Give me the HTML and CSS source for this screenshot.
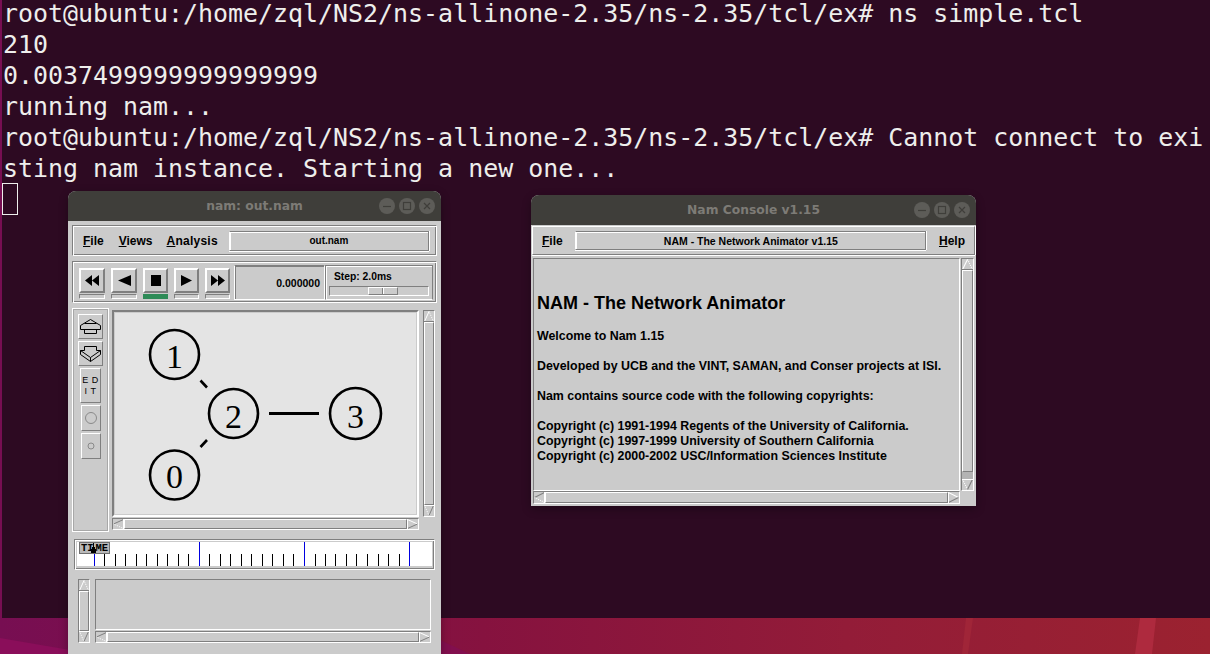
FILE: index.html
```html
<!DOCTYPE html>
<html lang="en">
<head>
<meta charset="utf-8">
<title>nam</title>
<link rel="stylesheet" href="styles.css">
</head>
<body>
<svg width="0" height="0" class="defs" aria-hidden="true">
  <symbol id="a-up" viewBox="0 0 10 11" preserveAspectRatio="none"><path d="M.5 10.500L5 .5" stroke="#fff" fill="none"/><path d="M5 .5L9.500 10.500" stroke="#fff" stroke-dasharray="1 1" fill="none"/><path d="M0 10.500H10" stroke="#7f7f7f" fill="none"/></symbol>
  <symbol id="a-down" viewBox="0 0 10 11" preserveAspectRatio="none"><path d="M.5 .5L5 10.500" stroke="#fff" stroke-dasharray="1 1" fill="none"/><path d="M5 10.500L9.500 .5" stroke="#7f7f7f" fill="none"/><path d="M0 .5H10" stroke="#fff" fill="none"/></symbol>
  <symbol id="a-left" viewBox="0 0 11 10" preserveAspectRatio="none"><path d="M.5 5L10.500 .5" stroke="#7f7f7f" fill="none"/><path d="M.5 5L10.500 9.500" stroke="#fff" stroke-dasharray="1 1" fill="none"/><path d="M10.500 0V10" stroke="#fff" fill="none"/></symbol>
  <symbol id="a-right" viewBox="0 0 11 10" preserveAspectRatio="none"><path d="M.5 .5L10.500 5" stroke="#fff" fill="none"/><path d="M.5 9.500L10.500 5" stroke="#7f7f7f" fill="none"/><path d="M.5 0V10" stroke="#fff" fill="none"/></symbol>
  <symbol id="win-btns" viewBox="0 0 56 16">
    <circle cx="8" cy="8" r="8" fill="#5d5c58"/><circle cx="28" cy="8" r="8" fill="#5d5c58"/><circle cx="48" cy="8" r="8" fill="#5d5c58"/>
    <path d="M4 8.500H12" stroke="#3f3e3a" stroke-width="1.200"/>
    <rect x="24.500" y="4.500" width="7" height="7" fill="none" stroke="#3f3e3a" stroke-width="1.200"/>
    <path d="M45 5L51 11M51 5L45 11" stroke="#3f3e3a" stroke-width="1.200"/>
  </symbol>
</svg>

<div class="desktop">
  <svg class="wallpaper" viewBox="0 0 1210 654" width="1210" height="654" aria-hidden="true">
    <defs>
      <linearGradient id="wall" x1="0" y1="0" x2="1" y2="0">
        <stop offset="0" stop-color="#770e52"/>
        <stop offset=".4" stop-color="#86123f"/>
        <stop offset=".7" stop-color="#931c38"/>
        <stop offset="1" stop-color="#9b2230"/>
      </linearGradient>
    </defs>
    <rect width="1210" height="654" fill="url(#wall)"/>
    <polygon points="0,638 70,650 70,654 0,654" fill="#8a0e5a"/>
    <polygon points="440,640 470,654 440,654" fill="#820f4e"/>
    <polygon points="966,618 973,618 968,654 962,654" fill="#a02538"/>
    <polygon points="1140,618 1156,618 1152,654 1135,654" fill="#ae2a3e"/>
  </svg>

  <div class="terminal">
    <div class="term-line">root@ubuntu:/home/zql/NS2/ns-allinone-2.35/ns-2.35/tcl/ex# ns simple.tcl</div>
    <div class="term-line">210</div>
    <div class="term-line">0.0037499999999999999</div>
    <div class="term-line">running nam...</div>
    <div class="term-line">root@ubuntu:/home/zql/NS2/ns-allinone-2.35/ns-2.35/tcl/ex# Cannot connect to exi</div>
    <div class="term-line">sting nam instance. Starting a new one...</div>
    <div class="term-cursor"></div>
  </div>

  <section class="window nam-window">
    <header class="titlebar"><span class="title">nam: out.nam</span><svg class="win-btns"><use href="#win-btns"/></svg></header>
    <div class="nam-body">
      <div class="groove nam-menu">
        <span class="menu-item nam-file"><u>F</u>ile</span>
        <span class="menu-item nam-views"><u>V</u>iews</span>
        <span class="menu-item nam-analysis"><u>A</u>nalysis</span>
        <div class="field nam-field">out.nam</div>
      </div>

      <div class="groove nam-toolbar">
        <div class="transport">
          <div class="tbtn wide"><div class="face"><svg viewBox="0 0 14 11" width="14" height="11"><path d="M7 0V11L0 5.500ZM14 0V11L7 5.500Z"/></svg></div><div class="led"></div></div>
          <div class="tbtn wide"><div class="face"><svg viewBox="0 0 13 11" width="13" height="11"><path d="M13 0V11L0 5.500Z"/></svg></div><div class="led"></div></div>
          <div class="tbtn"><div class="face"><svg viewBox="0 0 10 11" width="10" height="11"><path d="M0 0H10V11H0Z"/></svg></div><div class="led on"></div></div>
          <div class="tbtn"><div class="face"><svg viewBox="0 0 11 11" width="11" height="11"><path d="M0 0V11L11 5.500Z"/></svg></div><div class="led"></div></div>
          <div class="tbtn"><div class="face"><svg viewBox="0 0 14 11" width="14" height="11"><path d="M0 0V11L7 5.500ZM7 0V11L14 5.500Z"/></svg></div><div class="led"></div></div>
        </div>
        <div class="time-panel">0.000000</div>
        <div class="step-panel">
          <div class="step-label">Step: 2.0ms</div>
          <div class="step-scale"><div class="step-thumb"><i></i></div></div>
        </div>
      </div>

      <div class="nam-main">
        <div class="tools">
          <div class="tool layer"><svg viewBox="0 0 23 23" width="23" height="23"><path d="M11.500 4.500L1.500 10.500V14.500H21.500V10.500ZM5.500 14.500V18.500H17.500V14.500M5.500 8.500H17.500" fill="none" stroke="#000"/></svg></div>
          <div class="tool layer"><svg viewBox="0 0 23 23" width="23" height="23"><path d="M5.500 4.500H17.500V8.500H21.500V12.500L11.500 19.500L1.500 12.500V8.500H5.500ZM1.500 8.500L11.500 15.500L21.500 8.500M11.500 15.500V19.500" fill="none" stroke="#000"/></svg></div>
          <div class="tool edit"><span>E D</span><span>I T</span></div>
          <div class="tool shape"><svg viewBox="0 0 14 14" width="14" height="14"><circle cx="7" cy="7" r="5.500" fill="none" stroke="#8a8a8a"/></svg></div>
          <div class="tool shape"><svg viewBox="0 0 8 8" width="8" height="8"><circle cx="4" cy="4" r="3" fill="none" stroke="#8a8a8a"/></svg></div>
        </div>
        <div class="canvas-grid">
          <div class="canvas">
            <svg class="graph" viewBox="115 313 301 201" width="301" height="201">
              <g fill="none" stroke="#000" stroke-width="2.600">
                <circle cx="174.500" cy="354.500" r="24.500"/>
                <circle cx="233.500" cy="413.500" r="24.500"/>
                <circle cx="355.500" cy="413.500" r="25.500"/>
                <circle cx="174.500" cy="475" r="24.500"/>
                <path d="M200.500 380.500L207 387.500M200.500 447L207 440"/>
                <path d="M269 413.500H319" stroke-width="3"/>
              </g>
              <g class="node-labels" text-anchor="middle">
                <text x="174.500" y="368">1</text>
                <text x="233.500" y="428">2</text>
                <text x="355.500" y="428">3</text>
                <text x="174.500" y="488">0</text>
              </g>
            </svg>
          </div>
          <div class="sb v">
            <svg class="arrow"><use href="#a-up"/></svg><div class="thumb"></div><svg class="arrow"><use href="#a-down"/></svg>
          </div>
          <div class="sb h">
            <svg class="arrow"><use href="#a-left"/></svg><div class="thumb"></div><svg class="arrow"><use href="#a-right"/></svg>
          </div>
        </div>
      </div>

      <div class="groove timeline">
        <div class="time-strip">
          <svg class="ticks" viewBox="77 542 355 24" width="355" height="24">
            <path d="M104.500 554V566M115.500 554V566M125.500 554V566M136.500 554V566M146.500 554V566M157.500 554V566M167.500 554V566M178.500 554V566M188.500 554V566M209.500 554V566M220.500 554V566M230.500 554V566M241.500 554V566M251.500 554V566M262.500 554V566M272.500 554V566M283.500 554V566M293.500 554V566M315.500 554V566M325.500 554V566M335.500 554V566M346.500 554V566M356.500 554V566M367.500 554V566M378.500 554V566M388.500 554V566M399.500 554V566" stroke="#000"/>
            <path d="M94.500 546V566M199.500 542V566M304.500 542V566M409.500 542V566" stroke="#0000e0"/>
          </svg>
          <div class="time-label"><span>TI</span><span>ME</span><svg class="marker" viewBox="0 0 5 10" width="5" height="10"><path d="M2 0H3V4H4V6H5V10H0V6H1V4H2Z"/></svg></div>
        </div>
      </div>

      <div class="nam-annot">
        <div class="sb v">
          <svg class="arrow"><use href="#a-up"/></svg><div class="thumb"></div><svg class="arrow"><use href="#a-down"/></svg>
        </div>
        <div class="annot-right">
          <div class="annot-box"></div>
          <div class="sb h">
            <svg class="arrow"><use href="#a-left"/></svg><div class="thumb"></div><svg class="arrow"><use href="#a-right"/></svg>
          </div>
        </div>
      </div>
    </div>
  </section>

  <section class="window console-window">
    <header class="titlebar"><span class="title">Nam Console v1.15</span><svg class="win-btns"><use href="#win-btns"/></svg></header>
    <div class="console-body">
      <div class="console-menu">
        <span class="menu-item"><u>F</u>ile</span>
        <div class="field console-field">NAM - The Network Animator v1.15</div>
        <span class="menu-item"><u>H</u>elp</span>
      </div>
      <div class="console-grid">
        <div class="console-text">
          <h1>NAM - The Network Animator</h1>
          <p>Welcome to Nam 1.15</p>
          <p>Developed by UCB and the VINT, SAMAN, and Conser projects at ISI.</p>
          <p>Nam contains source code with the following copyrights:</p>
          <p>Copyright (c) 1991-1994 Regents of the University of California.<br>Copyright (c) 1997-1999 University of Southern California<br>Copyright (c) 2000-2002 USC/Information Sciences Institute</p>
        </div>
        <div class="sb v">
          <svg class="arrow"><use href="#a-up"/></svg><div class="thumb"></div><div class="trough-gap"></div><svg class="arrow"><use href="#a-down"/></svg>
        </div>
        <div class="sb h">
          <svg class="arrow"><use href="#a-left"/></svg><div class="thumb"></div><svg class="arrow"><use href="#a-right"/></svg>
        </div>
      </div>
    </div>
  </section>
</div>
</body>
</html>
```
FILE: styles.css
```css
* { box-sizing: border-box; }
html, body { margin: 0; padding: 0; }
body { width: 1210px; height: 654px; overflow: hidden; background: #2d0a22; }
.defs { position: absolute; }
.desktop { position: relative; width: 1210px; height: 654px; overflow: hidden; }
.wallpaper { position: absolute; left: 0; top: 0; display: block; }

/* terminal */
.terminal { position: absolute; left: 2px; top: 0; width: 1208px; height: 618px; background: #2d0a22; padding-left: 1px; overflow: hidden; }
.term-line { height: 31px; font: 24.930px/27px "DejaVu Sans Mono", monospace; color: #eeeeec; white-space: pre; }
.term-cursor { width: 16px; height: 32px; margin: -3px 0 0 -1px; border: 1px solid #eeeeec; }

/* windows */
.window { position: absolute; background: #cbcbcb; box-shadow: 0 3px 10px rgba(0, 0, 0, .3); font-family: "Liberation Sans", Arial, sans-serif; font-weight: 700; color: #000; }
.nam-window { left: 68px; top: 191px; width: 373px; height: 463px; border-radius: 8px 8px 0 0; }
.console-window { left: 531px; top: 195px; width: 445px; height: 311px; border-radius: 8px 8px 0 0; }
.titlebar { height: 30px; background: #3f3e3a; border-radius: 8px 8px 0 0; display: flex; align-items: center; justify-content: center; position: relative; }
.title { font: 700 12.300px "DejaVu Sans", sans-serif; color: #7d7b76; }
.win-btns { position: absolute; right: 6px; top: 7px; width: 56px; height: 16px; }

/* bevels */
.groove { border: 1px solid; border-color: #7f7f7f #fff #fff #7f7f7f; box-shadow: inset 1px 1px 0 #fff, inset -1px -1px 0 #7f7f7f; }
.field { border: 1px solid; border-color: #7f7f7f #7f7f7f #7f7f7f #fff; box-shadow: inset 1px 1px 0 #fff, 0 1px 0 #fff, 1px 0 0 #fff; display: flex; align-items: center; justify-content: center; }
.menu-item { font-size: 12px; line-height: 14px; }

/* nam */
.nam-body { display: flex; flex-direction: column; padding: 4px 4px 0; }
.nam-menu { height: 31px; display: flex; align-items: center; padding: 0 7px 0 10px; }
.nam-views { margin-left: 15px; }
.nam-analysis { margin-left: 14px; letter-spacing: .25px; }
.nam-field { margin-left: 11px; width: 200px; height: 20px; font-size: 10px; }
.nam-toolbar { height: 42px; margin-top: 5px; display: flex; align-items: stretch; padding: 3px 3px 2px 6px; }
.transport { display: flex; gap: 6px; padding-top: 3px; }
.tbtn { width: 25px; display: flex; flex-direction: column; }
.tbtn.wide { width: 26px; }
.face { height: 25px; border: 2px solid; border-color: #fff #7f7f7f #7f7f7f #fff; display: flex; align-items: center; justify-content: center; }
.face svg { display: block; }
.led { height: 5px; margin-top: 1px; border: 1px solid; border-color: #7f7f7f #fff #fff #7f7f7f; }
.led.on { background: #2e8b57; border-color: #2e8b57; }
.time-panel { margin-left: 4px; width: 91px; border: 1px solid; border-color: #7f7f7f #fff #fff #fff; box-shadow: inset 1px 1px 0 #7f7f7f; font-size: 10.500px; display: flex; align-items: center; justify-content: flex-end; padding-right: 4px; }
.step-panel { width: 108px; border: 1px solid; border-color: #7f7f7f #7f7f7f #fff #7f7f7f; box-shadow: inset 1px 1px 0 #fff; padding: 4px 3px 0 3px; }
.step-label { font-size: 10.300px; line-height: 13px; margin-left: 5px; }
.step-scale { height: 10px; margin-top: 3px; width: 100px; border: 1px solid; border-color: #7f7f7f #fff #fff #7f7f7f; padding-left: 38px; }
.step-thumb { width: 30px; height: 100%; border: 1px solid; border-color: #fff #7f7f7f #7f7f7f #fff; position: relative; }
.step-thumb i { position: absolute; left: 13px; top: 0; bottom: 0; width: 2px; background: linear-gradient(90deg, #7f7f7f 50%, #fff 50%); }

.nam-main { display: flex; margin-top: 5px; height: 224px; }
.tools { width: 37px; border: 1px solid #fff; box-shadow: inset 0 0 0 1px #a8a8a8; display: flex; flex-direction: column; align-items: center; padding-top: 5px; }
.tool { display: flex; align-items: center; justify-content: center; border: 1px solid; border-color: #fff #7f7f7f #7f7f7f #fff; }
.tool.layer { width: 25px; height: 25px; margin-bottom: 2px; }
.tool.edit { width: 21px; height: 35px; flex-direction: column; gap: 2px; font: 400 9px/9px "Liberation Sans", sans-serif; letter-spacing: .5px; margin-bottom: 2px; }
.tool.shape { width: 20px; height: 26px; margin-bottom: 2px; }

.canvas-grid { margin: 2px 0 0 3px; display: grid; grid-template-columns: 307px 12px; grid-template-rows: 207px 12px; column-gap: 4px; row-gap: 1px; }
.canvas { border: 2px solid; border-color: #7f7f7f #fff #fff #7f7f7f; box-shadow: inset 0 0 0 1px #cbcbcb; padding: 1px; background: #e4e4e4; }
.graph { display: block; }
.node-labels { font: 400 34px "Liberation Serif", serif; fill: #000; }

/* scrollbars */
.sb { display: flex; border: 1px solid; border-color: #7f7f7f #fff #fff #7f7f7f; }
.sb.v { flex-direction: column; width: 12px; }
.sb.h { flex-direction: row; height: 12px; }
.sb .arrow { flex: none; display: block; }
.sb.v .arrow { width: 100%; height: 11px; }
.sb.h .arrow { width: 11px; height: 100%; }
.sb .thumb { flex: 1; border: 1px solid; border-color: #fff #7f7f7f #7f7f7f #fff; }
.trough-gap { height: 7px; background: #b3b3b3; }

/* timeline */
.timeline { margin: 7px 0 0 2px; width: 361px; height: 31px; padding: 2px; }
.time-strip { position: relative; width: 355px; height: 24px; background: #fff; }
.ticks { display: block; shape-rendering: crispEdges; }
.time-label { position: absolute; left: 2px; top: 0; width: 31px; height: 12px; background: #b9b9b9; border: 1px solid #6f6f6f; display: flex; justify-content: space-between; align-items: center; padding: 0 1px; font: 700 10.500px/9px "Liberation Mono", monospace; }
.marker { position: absolute; left: 11px; top: 0; }

.nam-annot { display: flex; margin: 9px 0 0 6px; gap: 5px; height: 64px; }
.annot-right { width: 336px; display: flex; flex-direction: column; gap: 1px; }
.annot-box { flex: 1; border: 1px solid; border-color: #7f7f7f #fff #fff #7f7f7f; }

/* console */
.console-body { display: flex; flex-direction: column; padding: 1px 1px 0; }
.console-menu { height: 29px; border: 1px solid; border-color: #fff #7f7f7f #7f7f7f #fff; box-shadow: 0 1px 0 #fff, 1px 0 0 #fff; display: flex; align-items: center; justify-content: space-between; padding: 0 9px 0 9px; }
.console-field { width: 351px; height: 19px; font-size: 10.500px; }
.console-grid { margin: 3px 0 0 1px; display: grid; grid-template-columns: 427px 14px; grid-template-rows: 233px 13px; }
.console-text { border: 1px solid; border-color: #7f7f7f #fff #fff #7f7f7f; padding: 34px 0 0 3px; font-size: 12.400px; line-height: 15px; }
.console-text h1 { margin: 0 0 16px; font-size: 18px; line-height: 20px; }
.console-text p { margin: 0 0 15px; }
.console-grid .sb.v { margin-left: 1px; width: 13px; }
.console-grid .sb.h { height: 13px; }
```
